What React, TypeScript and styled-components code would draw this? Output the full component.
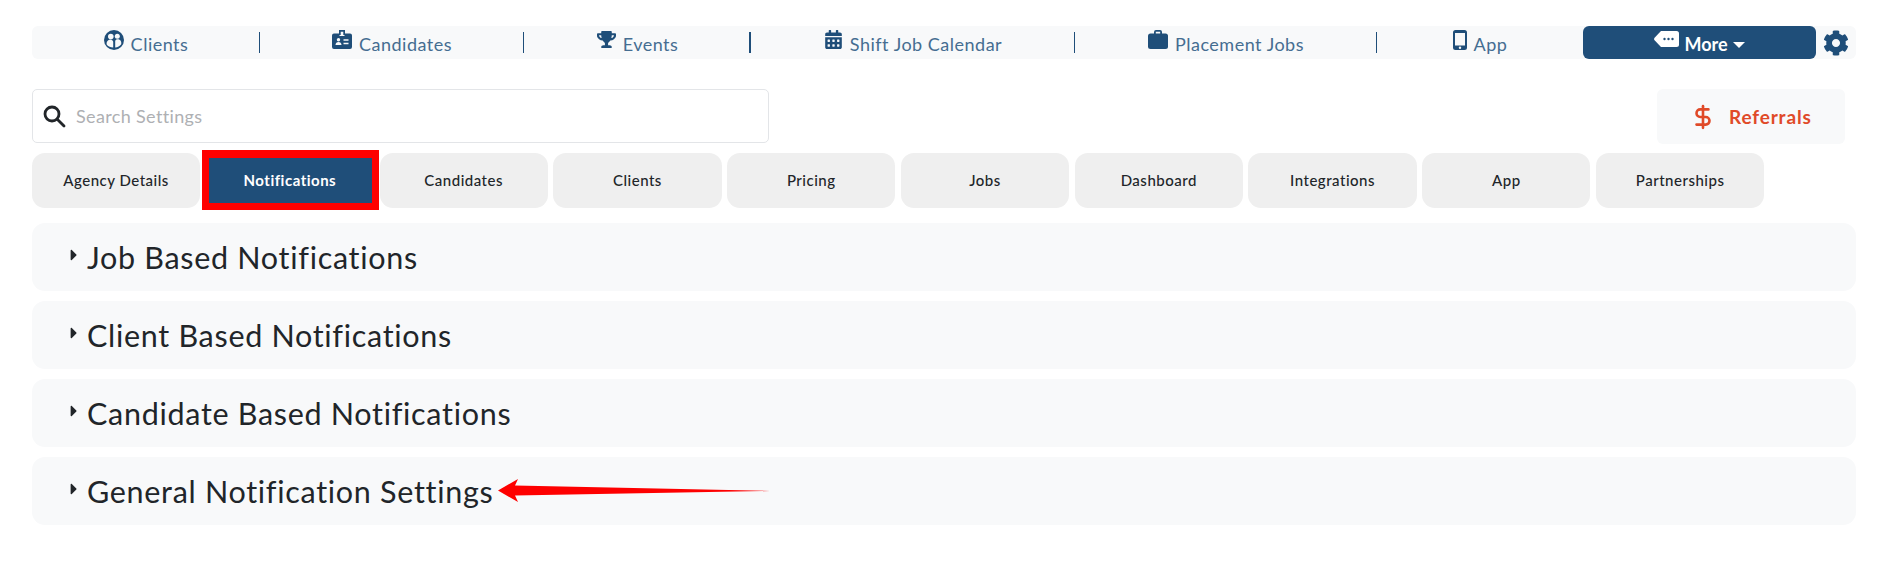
import React from "react";
import styled, { createGlobalStyle } from "styled-components";
import { FaTrophy, FaCalendarAlt, FaCog, FaCaretRight } from "react-icons/fa";
import { DollarSign } from "lucide-react";

const Global = createGlobalStyle`
  html, body { margin: 0; padding: 0; background: #fff; }
  body { font-family: "Lato", "Noto Sans", sans-serif; color: #212529; }
  * { box-sizing: border-box; }
`;

const Page = styled.div`
  padding: 26px 30px 54px 32px;
`;

const NavBar = styled.nav`
  display: grid;
  grid-template-columns: 228px 264px 227px 324px 302px 206px 233px 1fr;
  height: 33px;
  background: #f8f9fa;
  border-radius: 6px;
`;

const NavItem = styled.a<{ $last?: boolean; $strong?: boolean }>`
  display: flex;
  justify-content: center;
  gap: 7px;
  align-items: flex-start;
  padding-top: 4px;
  color: #1f4e79;
  position: relative;
  &::after {
    content: "";
    display: ${(p) => (p.$last ? "none" : "block")};
    position: absolute;
    right: 0;
    top: 6px;
    height: 21px;
    width: ${(p) => (p.$strong ? "2px" : "1px")};
    background: #1f4e79;
  }
`;

const NavIcon = styled.span`
  display: inline-flex;
  font-size: 19px;
  height: 19px;
  color: #1f4e79;
`;

const NavLabel = styled.span`
  font-size: 18px;
  line-height: 22px;
  margin-top: 3px;
  font-weight: 400;
  letter-spacing: 0.5px;
  color: #456d91;
`;

const MoreButton = styled.button`
  border: 0;
  background: #1f4e79;
  border-radius: 6px;
  color: #fff;
  display: flex;
  justify-content: center;
  align-items: flex-start;
  gap: 5px;
  padding: 5px 0 0 0;
  font-family: inherit;
  font-size: 18px;
  font-weight: 700;
  line-height: 22px;
`;

const MoreLabel = styled.span`
  margin-top: 2px;
`;

const MoreCaret = styled.span`
  width: 0;
  height: 0;
  margin-top: 11px;
  border-left: 6px solid transparent;
  border-right: 6px solid transparent;
  border-top: 6px solid #fff;
`;

const GearCell = styled.span`
  display: flex;
  align-items: center;
  justify-content: center;
  padding-right: 1px;
  font-size: 26px;
  color: #1f4e79;
`;

const SearchRow = styled.div`
  display: flex;
  justify-content: space-between;
  margin-top: 30px;
  padding-right: 11px;
`;

const SearchBox = styled.label`
  width: 737px;
  height: 54px;
  border: 1px solid #e3e5e8;
  border-radius: 5px;
  display: flex;
  align-items: center;
  padding-left: 10px;
  gap: 8px;
  background: #fff;
`;

const SearchInput = styled.input`
  border: 0;
  outline: 0;
  flex: 1;
  font-family: inherit;
  font-size: 18px;
  letter-spacing: 0.35px;
  &::placeholder { color: #aeb0b3; opacity: 1; }
`;

const ReferralButton = styled.button`
  width: 188px;
  height: 55px;
  border: 0;
  border-radius: 6px;
  background: #f8f9fa;
  color: #e04a28;
  display: flex;
  align-items: center;
  justify-content: flex-start;
  padding: 0 0 0 33px;
  gap: 13px;
  font-family: inherit;
  font-size: 19px;
  font-weight: 700;
  letter-spacing: 0.85px;
`;

const TabRow = styled.div`
  display: flex;
  gap: 5.6px;
  margin-top: 9px;
`;

const Tab = styled.button<{ $active?: boolean }>`
  width: 168.2px;
  height: 55px;
  border: 0;
  padding: 0 0 2px;
  border-radius: ${(p) => (p.$active ? "0" : "13px")};
  background: ${(p) => (p.$active ? "#1f4e79" : "#efefef")};
  color: ${(p) => (p.$active ? "#fff" : "#212529")};
  font-family: inherit;
  font-size: 15px;
  font-weight: ${(p) => (p.$active ? 700 : 500)};
  letter-spacing: 0.5px;
  position: relative;
`;

const TabHighlight = styled.span`
  position: absolute;
  left: -4px;
  right: -5px;
  top: -3px;
  bottom: -2px;
  border: solid #fe0000;
  border-width: 8px 7px 7px;
  pointer-events: none;
`;

const Accordions = styled.div`
  display: flex;
  flex-direction: column;
  gap: 10px;
  margin-top: 15px;
`;

const AccordionRow = styled.div`
  height: 68px;
  border-radius: 13px;
  background: #f8f9fa;
  display: flex;
  align-items: center;
  padding-left: 33px;
  position: relative;
`;

const Caret = styled.span`
  display: inline-flex;
  width: 22px;
  font-size: 18px;
  margin-top: -4px;
  color: #212529;
`;

const AccordionTitle = styled.h3`
  margin: 0;
  font-size: 30.5px;
  font-weight: 400;
  letter-spacing: 0.7px;
  line-height: 34px;
`;

const ArrowMark = styled.svg`
  position: absolute;
  left: 466px;
  top: 21px;
`;

const ClientsIcon = () => (
  <svg width="20" height="20" viewBox="0 0 20 20" fill="#1f4e79">
    <circle cx="10" cy="10" r="10" />
    <circle cx="6.800" cy="6.600" r="2.800" fill="#f8f9fa" />
    <circle cx="13.300" cy="6.200" r="2.500" fill="#f8f9fa" />
    <path d="M2.800 14.800c-.7-3 1-5 3.700-5 1.500 0 2.400.7 2.700 2v5.700c-2.600-.1-4.900-.9-6.400-2.700zM17.200 14.200c.6-2.800-.9-5-3.500-5-1.300 0-2.200.6-2.500 1.800v6.500c2.500-.2 4.600-1.400 6-3.300z" fill="#f8f9fa" />
  </svg>
);

const BadgeIcon = () => (
  <svg width="20" height="19" viewBox="0 0 20 19" fill="#1f4e79">
    <path d="M7 0h6v5h-1.700V1.700H8.700V5H7z" />
    <path d="M2 3.500h5.500v2.500h5V3.500H18a2 2 0 0 1 2 2V17a2 2 0 0 1-2 2H2a2 2 0 0 1-2-2V5.500a2 2 0 0 1 2-2z" />
    <circle cx="6.500" cy="9.800" r="1.700" fill="#f8f9fa" />
    <path d="M3.500 15c0-2 1.300-3 3-3s3 1 3 3z" fill="#f8f9fa" />
    <path d="M11.500 9.300h5v1.400h-5zM11.500 12.800h5v1.400h-5z" fill="#f8f9fa" />
  </svg>
);

const CaseIcon = () => (
  <svg width="20" height="19" viewBox="0 0 20 19" fill="#1f4e79">
    <path d="M6 4V2a2 2 0 0 1 2-2h4a2 2 0 0 1 2 2v2h-1.800V1.800H7.800V4z" />
    <rect x="0" y="3.500" width="20" height="15.500" rx="2.500" />
  </svg>
);

const PhoneIcon = () => (
  <svg width="14" height="20" viewBox="0 0 14 20" fill="#1f4e79">
    <path fillRule="evenodd" d="M2.500 0h9A2.500 2.500 0 0 1 14 2.500v15a2.500 2.500 0 0 1-2.500 2.500h-9A2.500 2.500 0 0 1 0 17.500v-15A2.500 2.500 0 0 1 2.500 0zM2 3v12.500h10V3z" />
    <circle cx="7" cy="17.700" r="1.200" fill="#f8f9fa" />
  </svg>
);

const MoreTag = () => (
  <svg width="25" height="16" viewBox="0 0 25 16" fill="#fff">
    <path d="M7 0h15.500A2.500 2.500 0 0 1 25 2.500v11a2.500 2.500 0 0 1-2.500 2.500H7L.6 9.300a2 2 0 0 1 0-2.600z" />
    <circle cx="10.500" cy="8" r="1.200" fill="#1f4e79" />
    <circle cx="14.500" cy="8" r="1.200" fill="#1f4e79" />
    <circle cx="18.500" cy="8" r="1.200" fill="#1f4e79" />
  </svg>
);

const SearchGlyph = () => (
  <svg width="23" height="23" viewBox="0 0 23 23" fill="none" stroke="#212529" strokeWidth="2.800" strokeLinecap="round">
    <circle cx="9" cy="9" r="7" />
    <path d="M14.500 14.500 21 21" />
  </svg>
);

const navItems = [
  { label: "Clients", icon: <ClientsIcon /> },
  { label: "Candidates", icon: <BadgeIcon /> },
  { label: "Events", icon: <FaTrophy />, strong: true },
  { label: "Shift Job Calendar", icon: <FaCalendarAlt /> },
  { label: "Placement Jobs", icon: <CaseIcon /> },
  { label: "App", icon: <PhoneIcon />, last: true },
];

const tabs = ["Agency Details", "Notifications", "Candidates", "Clients", "Pricing", "Jobs", "Dashboard", "Integrations", "App", "Partnerships"];

const sections = ["Job Based Notifications", "Client Based Notifications", "Candidate Based Notifications", "General Notification Settings"];

export default function App() {
  return (
    <Page>
      <Global />
      <NavBar>
        {navItems.map((n) => (
          <NavItem key={n.label} $last={n.last} $strong={n.strong}>
            <NavIcon>{n.icon}</NavIcon>
            <NavLabel>{n.label}</NavLabel>
          </NavItem>
        ))}
        <MoreButton>
          <MoreTag />
          <MoreLabel>More</MoreLabel>
          <MoreCaret />
        </MoreButton>
        <GearCell><FaCog /></GearCell>
      </NavBar>
      <SearchRow>
        <SearchBox>
          <SearchGlyph />
          <SearchInput placeholder="Search Settings" />
        </SearchBox>
        <ReferralButton>
          <DollarSign size={26} strokeWidth={2.4} />
          Referrals
        </ReferralButton>
      </SearchRow>
      <TabRow>
        {tabs.map((t) => (
          <Tab key={t} $active={t === "Notifications"}>
            {t}
            {t === "Notifications" && <TabHighlight />}
          </Tab>
        ))}
      </TabRow>
      <Accordions>
        {sections.map((s, i) => (
          <AccordionRow key={s}>
            <Caret><FaCaretRight /></Caret>
            <AccordionTitle>{s}</AccordionTitle>
            {i === 3 && (
              <ArrowMark width="274" height="25" viewBox="0 0 274 25">
                <path d="M0 12.500 20 1l-3 6.500 255 5.500-255 4.500 3 6.500z" fill="#fe0000" />
              </ArrowMark>
            )}
          </AccordionRow>
        ))}
      </Accordions>
    </Page>
  );
}
